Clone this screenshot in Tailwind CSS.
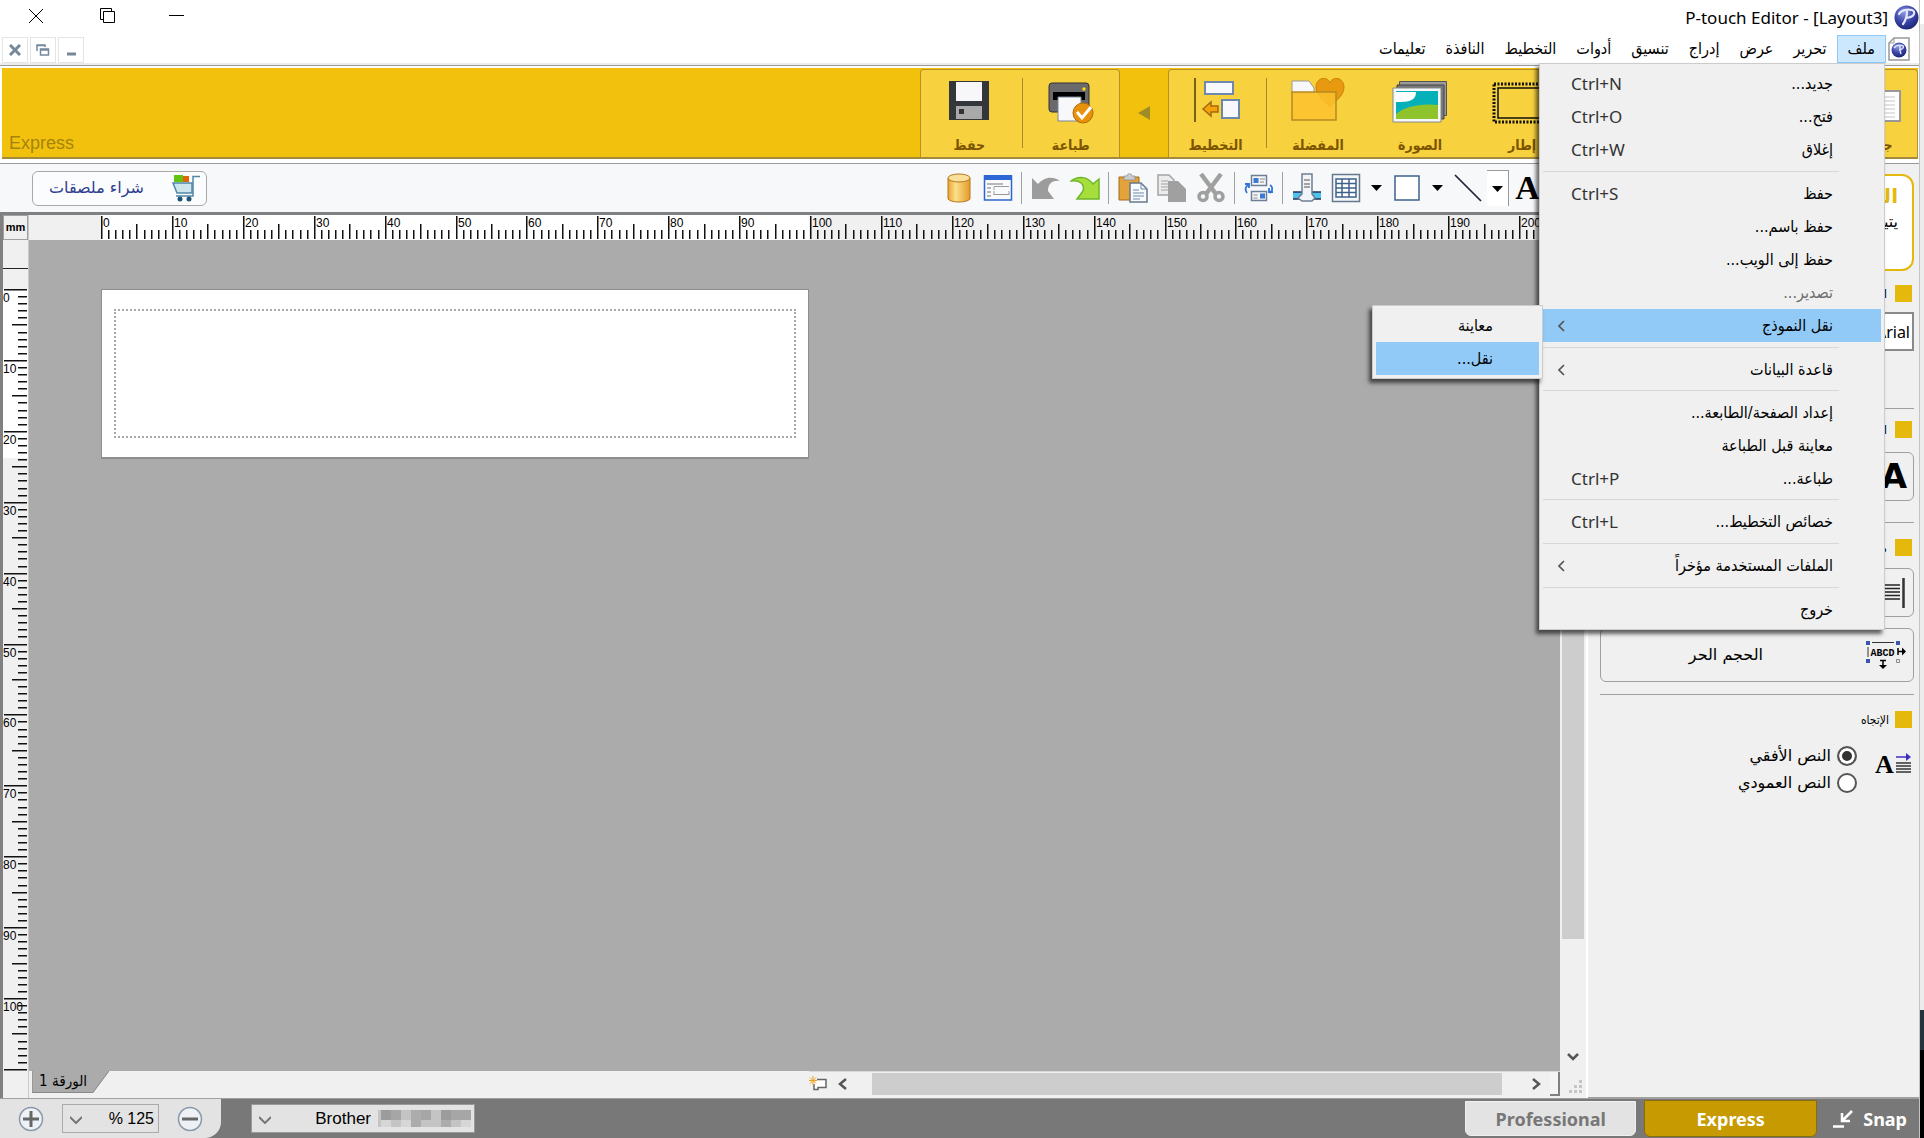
<!DOCTYPE html>
<html lang="ar">
<head>
<meta charset="utf-8">
<title>P-touch Editor</title>
<script src="https://cdn.jsdelivr.net/npm/@tailwindcss/browser@4"></script>
</head>
<body class="flex h-screen overflow-hidden bg-[#f0f0f0] font-['DejaVu_Sans_Condensed',sans-serif] text-base text-black">

<div class="relative flex min-w-0 flex-1 flex-col">

  <!-- Title bar -->
  <header class="flex h-[35px] shrink-0 items-center justify-between bg-white">
    <div class="flex pb-1">
      <button aria-label="Close" class="flex h-6 w-[72px] items-center justify-center"><svg width="16" height="16" viewBox="0 0 16 16" stroke="#000" fill="none"><path d="M1 1l14 14M15 1L1 15"/></svg></button>
      <button aria-label="Restore" class="flex h-6 w-[71px] items-center justify-center"><svg width="16" height="16" viewBox="0 0 16 16" stroke="#000" fill="none"><path d="M.5 11.500V.5h11v3M.5 11.500h3M3.500 3.500h11v11h-11z"/></svg></button>
      <button aria-label="Minimize" class="flex h-6 w-[68px] items-center justify-center"><svg width="16" height="16" viewBox="0 0 16 16" stroke="#000"><path d="M0 7.500h15"/></svg></button>
    </div>
    <div class="flex items-center gap-1.5">
      <h1 class="font-['Noto_Sans',sans-serif] text-[17px] leading-6">P-touch Editor - [Layout3]</h1>
      <svg width="25" height="25" viewBox="0 0 25 25"><defs><radialGradient id="orb" cx=".4" cy=".3" r=".75"><stop offset="0" stop-color="#8c97e0"/><stop offset=".55" stop-color="#3a44a6"/><stop offset="1" stop-color="#1c2370"/></radialGradient></defs><circle cx="12.500" cy="12.500" r="12" fill="url(#orb)"/><path d="M5 9C7 5 13 4 18 5c4 1.500 3 7-6 8M13 6c0 4-1 9-4 13" fill="none" stroke="#e4e8ff" stroke-width="2.200" stroke-linecap="round"/></svg>
    </div>
  </header>

  <!-- Menu bar -->
  <nav class="flex h-[30px] shrink-0 items-stretch justify-between border-b-2 border-[#ececec] bg-white pr-[9px]">
    <div class="flex gap-0.5 pt-0.5 pl-0.5">
      <button aria-label="Close document" class="flex size-[26px] items-center justify-center border border-[#e4e4e4]"><svg width="12" height="12" viewBox="0 0 12 12" stroke="#75879a" stroke-width="3"><path d="M1 1l10 10M11 1L1 11"/></svg></button>
      <button aria-label="Restore document" class="flex size-[26px] items-center justify-center border border-[#e4e4e4]"><svg width="14" height="14" viewBox="0 0 14 14" stroke="#75879a" fill="none" stroke-width="1.500"><path d="M1 8V2h8v2M1 2.500h8M4.500 6h8v6h-8zM4.500 7h8" /></svg></button>
      <button aria-label="Minimize document" class="flex size-[26px] items-center justify-center border border-[#e4e4e4]"><svg width="12" height="12" viewBox="0 0 12 12" stroke="#75879a" stroke-width="3"><path d="M2 10h9"/></svg></button>
    </div>
    <div dir="rtl" class="flex items-stretch">
      <svg class="mt-0.5 ml-0.5" width="22" height="24" viewBox="0 0 22 24"><path d="M6 1h15v22H1V6z" fill="#fff" stroke="#999" stroke-width="1.500"/><path d="M6 1v5H1" fill="none" stroke="#999"/><circle cx="11" cy="13" r="7.500" fill="url(#orb)"/><path d="M6 11c2-3 5-3 8-2.500 3 1 1 4-3 4.500M12 9c0 3 0 6 1 8" fill="none" stroke="#dde2ff" stroke-width="1.500"/></svg>
      <button class="border border-[#90c8f6] bg-[#cce8ff] px-2.5">ملف</button>
      <button class="px-2.5">تحرير</button>
      <button class="px-2.5">عرض</button>
      <button class="px-2.5">إدراج</button>
      <button class="px-2.5">تنسيق</button>
      <button class="px-2.5">أدوات</button>
      <button class="px-2.5">التخطيط</button>
      <button class="px-2.5">النافذة</button>
      <button class="px-2.5">تعليمات</button>
    </div>
  </nav>

  <!-- Ribbon -->
  <section class="flex h-[99px] shrink-0 flex-col border-y border-[#9a9a9a] bg-white pt-0.5 pr-px pb-1 pl-0.5">
    <div class="flex flex-1 items-end border-b-2 border-[#a38a3c] bg-[#f1c10e] font-bold text-[#7d5500]">
      <div class="flex-1 pl-[7px] font-['Liberation_Sans',sans-serif] text-lg font-normal text-[#a5830c]">Express</div>
      <div class="flex h-[88px] w-[200px] rounded-t border border-b-0 border-[#b3922a] bg-[#f7d13e] text-sm">
        <button class="flex flex-1 flex-col items-center justify-between pt-2.5 pr-1 pb-0.5">
          <svg width="42" height="42" viewBox="0 0 42 42"><path d="M1 1h40v39H1z" fill="#33373b"/><path d="M8 2h26v19H8z" fill="#f7f7f9"/><path d="M8 26h26v13H8z" fill="#a9a9a9"/><path d="M11 29h5v5h-5z" fill="#333"/></svg>
          <span>حفظ</span>
        </button>
        <span class="mt-2 h-[70px] w-px bg-[#a88a2a]"></span>
        <button class="flex flex-1 flex-col items-center justify-between pt-2.5 pb-0.5">
          <svg width="46" height="44" viewBox="0 0 46 44"><rect x="1" y="3" width="40" height="29" rx="3" fill="#6a6a6c" stroke="#333"/><path d="M5 12h32v8H5z" fill="#000"/><path d="M10 17h23v24H10z" fill="#f8f8fa" stroke="#7b8797"/><circle cx="36" cy="9" r="1.700" fill="#fd0"/><circle cx="35" cy="33" r="10" fill="#e8920c" stroke="#b36a08"/><path d="M29 32l5 6 9-11" fill="none" stroke="#fff" stroke-width="3"/></svg>
          <span>طباعة</span>
        </button>
      </div>
      <button aria-label="طي" class="flex h-[88px] w-12 items-center justify-center"><svg width="12" height="14" viewBox="0 0 12 14"><path d="M12 0v14L0 7z" fill="#a08c24"/></svg></button>
      <div class="flex h-[88px] w-[750px] rounded-t border border-b-0 border-[#b3922a] bg-[#f7d13e] text-sm">
        <button class="flex w-[97px] flex-col items-center justify-between pt-2 pr-1 pb-0.5">
          <svg width="48" height="46" viewBox="0 0 48 46"><path d="M3 0v44" stroke="#4a3c10" stroke-width="1.500"/><path d="M13 4h28v12H13zM30 22h17v18H30z" fill="#f6f8fb" stroke="#6d88ac" stroke-width="2"/><path d="M11 31l8-7v4h7v6h-7v4z" fill="#f5a30a" stroke="#a26a10" stroke-width="1.500"/></svg>
          <span>التخطيط</span>
        </button>
        <span class="mt-2 h-[70px] w-px bg-[#a88a2a]"></span>
        <button class="flex w-[102px] flex-col items-center justify-between pt-2 pb-0.5">
          <svg width="56" height="46" viewBox="0 0 56 46"><path d="M2 15V3h17l5 7v5z" fill="#f8f8fa" stroke="#999"/><path d="M40 29C33 22 26 17 26 9c0-9 11-12 14-4 3-8 14-5 14 4 0 8-7 13-14 20z" fill="#e9990f" stroke="#c8820e"/><path d="M2 14h44v28H2z" fill="#fcc22e" fill-opacity=".85" stroke="#b58a20" stroke-width="1.500"/></svg>
          <span>المفضلة</span>
        </button>
        <button class="flex w-[102px] flex-col items-center justify-between pt-2.5 pb-0.5">
          <svg width="56" height="44" viewBox="0 0 56 44"><path d="M7.500 1.500h47v34h-47z" fill="#9a9a9a" stroke="#555"/><path d="M5 5h47v34H5z" fill="#777" stroke="#444"/><path d="M1 8h48v34H1z" fill="#f4f8fa" stroke="#888"/><path d="M4 11h42v28H4z" fill="#05b0b8"/><path d="M4 12h20c0 10-10 10-20 10z" fill="#fff"/><path d="M4 34c8-7 24-11 42-9v14H4z" fill="#8fc32b"/></svg>
          <span>الصورة</span>
        </button>
        <button class="flex w-[102px] flex-col items-center justify-between pt-3 pb-0.5">
          <svg width="60" height="42" viewBox="0 0 60 42" fill="none" stroke="#111"><path d="M2 2h56v38H2z" stroke-width="3" stroke-dasharray="2 1.500"/><path d="M6 6h48v30H6z" stroke-width="1.500"/></svg>
          <span>إطار</span>
        </button>
        <button class="ml-auto flex w-[84px] flex-col items-center justify-between pt-5 pb-0.5">
          <svg width="52" height="32" viewBox="0 0 52 32"><path d="M1 1h50v30H1z" fill="#fff" stroke="#999" stroke-width="2"/><path d="M8 7h38M8 11h38M8 15h38M8 19h38M8 23h38M8 27h38" stroke="#c4c4c4"/></svg>
          <span>جدول</span>
        </button>
      </div>
    </div>
  </section>

  <!-- Editor and property panel -->
  <div class="flex min-h-0 flex-1">
    <main class="flex min-w-0 flex-1 flex-col">

      <!-- Toolbar -->
      <div class="flex h-[51px] shrink-0 items-center justify-between border-b-3 border-[#808080] bg-[#f7f8fa] pr-[42px] pl-8">
        <button dir="rtl" class="flex h-[35px] w-[175px] items-center gap-7 rounded-md border border-[#a8a8a8] bg-[#fbfcfd] pr-1.5 font-['DejaVu_Sans',sans-serif] text-[#2f3f8f]">
          <svg width="28" height="28" viewBox="0 0 28 28"><path d="M2 1h9v7H2z" fill="#62c410"/><path d="M11 2h6v6h-6z" fill="#e0640e"/><path d="M1 9h19v10H5z" fill="#cde6ee" stroke="#4f87a6" stroke-width="1.500"/><path d="M28 2.500h-7V22H4" fill="none" stroke="#4f87a6" stroke-width="1.500"/><circle cx="8" cy="25" r="2.500" fill="#1f5272"/><circle cx="17" cy="25" r="2.500" fill="#1f5272"/></svg>
          شراء ملصقات
        </button>
        <div class="flex items-center">
          <button aria-label="قاعدة البيانات" class="flex w-[39px] justify-center"><svg width="30" height="30" viewBox="0 0 30 30"><defs><linearGradient id="cyl"><stop offset="0" stop-color="#e9a32e"/><stop offset=".35" stop-color="#fce08c"/><stop offset="1" stop-color="#e49a26"/></linearGradient></defs><path d="M4 5v21c3 4 19 4 22 0V5z" fill="url(#cyl)" stroke="#b7761d"/><ellipse cx="15" cy="5" rx="11" ry="4" fill="#fbe09a" stroke="#b7761d"/></svg></button>
          <button aria-label="عرض السجل" class="flex w-[39px] justify-center"><svg width="30" height="30" viewBox="0 0 30 30"><path d="M1.500 3h27v24h-27z" fill="#f8fafc" stroke="#2e66cc" stroke-width="1.500"/><path d="M1 2h28v5H1z" fill="#2e66d6"/><path d="M4 11h16M4 15h4M4 19h4M4 23h4" stroke="#777"/><path d="M11 13.500h15M11 21.500h15M11 18v4M26 18v4M11 14v3" stroke="#999" fill="none"/></svg></button>
          <span class="mx-1 h-8 w-px bg-[#a0a0a0]"></span>
          <button aria-label="تراجع" class="flex w-[39px] justify-center"><svg width="30" height="30" viewBox="0 0 30 30"><path d="M1 5l6 6c5-6 14-9 22-3-9-1-12 4-12 10l6 8H1z" fill="#9c9c9c"/></svg></button>
          <button aria-label="إعادة" class="flex w-[39px] justify-center"><svg width="30" height="30" viewBox="0 0 30 30"><path d="M29 6l-6 5C18 4 9 2 1 8c9-1 14 3 12 10l-6 8h22z" fill="#a6df3c" stroke="#6db52a" stroke-width="1.500"/></svg></button>
          <span class="mx-1 h-8 w-px bg-[#a0a0a0]"></span>
          <button aria-label="لصق" class="flex w-[39px] justify-center"><svg width="30" height="30" viewBox="0 0 30 30"><path d="M1 4h20v23H1z" fill="#e3a33a" stroke="#a06a1a"/><path d="M6 3h3c0-3 5-3 5 0h3v4H6z" fill="#c9cdd2" stroke="#888" stroke-width=".7"/><path d="M12 10h11l6 6v13H12z" fill="#f8fafc" stroke="#66788c" stroke-width="1.500"/><path d="M23 10v6h6M15 17h6M15 20h11M15 23h11M15 26h7" fill="none" stroke="#6d88ac"/></svg></button>
          <button aria-label="نسخ" class="flex w-[39px] justify-center"><svg width="30" height="30" viewBox="0 0 30 30"><path d="M1 2h11l5 5v15H1z" fill="#ececec" stroke="#a4a4a4" stroke-width="1.500"/><path d="M4 8h7M4 11h9M4 14h8M4 17h8" stroke="#a4a4a4"/><path d="M11 8h10l8 8v13H11z" fill="#a0a0a0"/></svg></button>
          <button aria-label="قص" class="flex w-[39px] justify-center"><svg width="30" height="30" viewBox="0 0 30 30" stroke="#a0a0a0" fill="none"><path d="M5 1l15 20M25 1L10 21" stroke-width="4.500"/><circle cx="7" cy="23.500" r="4" stroke-width="3.500"/><circle cx="23" cy="23.500" r="4" stroke-width="3.500"/></svg></button>
          <span class="mx-1 h-8 w-px bg-[#a0a0a0]"></span>
          <button aria-label="تبديل" class="flex w-[39px] justify-center"><svg width="30" height="30" viewBox="0 0 30 30"><path d="M7.500 2.500h15v10h-15zM7.500 18.500h15v9h-15z" fill="#f4f6fa" stroke="#6d7f96" stroke-width="1.500"/><path d="M9.500 5h5v5h-5zM16 20.500h5v5h-5z" fill="#3a7ad0"/><path d="M16 6h5M16 9h4M9.500 22h4M9.500 25h4" stroke="#888"/><path d="M4 12c-3 2-3 5-1 8M1 11h4v4M26 12c3 2 3 5 0 8M29 19h-4v-4" fill="none" stroke="#2d73d8" stroke-width="1.800"/></svg></button>
          <span class="mx-1 h-8 w-px bg-[#a0a0a0]"></span>
          <button aria-label="قطع الشريط" class="flex w-[39px] justify-center"><svg width="30" height="30" viewBox="0 0 30 30"><path d="M1 19h28v7H1z" fill="#4cc3ee"/><path d="M1 19h28M1 26h28" stroke="#235" stroke-width="1.500"/><path d="M10 1h10v20l3 4-3 3H10l-4-3 4-4z" fill="#f2f4f7" stroke="#6d7f96" stroke-width="1.500"/><path d="M12 7h6M12 11h6M12 14h6" stroke="#888" stroke-width="1.500"/></svg></button>
          <button aria-label="جدول" class="flex w-[39px] justify-center"><svg width="30" height="30" viewBox="0 0 30 30"><path d="M1.500 1.500h27v27h-27z" fill="#f4f6f8" stroke="#66788c" stroke-width="1.500"/><path d="M5 6h20v18H5zM5 10.500h20M5 15h20M5 19.500h20M11 6v18M18 6v18" fill="#fff" stroke="#3f628c" stroke-width="1.500"/></svg></button>
          <button aria-label="خيارات الجدول" class="flex w-[22px] justify-center"><svg width="11" height="6" viewBox="0 0 11 6"><path d="M0 0h11L5.500 6z"/></svg></button>
          <button aria-label="مستطيل" class="flex w-[39px] justify-center"><svg width="26" height="26" viewBox="0 0 26 26"><path d="M1 1h24v24H1z" fill="#fff" stroke="#3f628c" stroke-width="1.500"/></svg></button>
          <button aria-label="خيارات المستطيل" class="flex w-[22px] justify-center"><svg width="11" height="6" viewBox="0 0 11 6"><path d="M0 0h11L5.500 6z"/></svg></button>
          <button aria-label="خط" class="flex w-[39px] justify-center"><svg width="28" height="28" viewBox="0 0 28 28"><path d="M1 1l26 26" stroke="#223" stroke-width="1.700"/></svg></button>
          <button aria-label="خيارات الخط" class="flex h-9 w-[22px] items-center justify-center border-t border-r border-[#999] bg-white"><svg width="11" height="6" viewBox="0 0 11 6"><path d="M0 0h11L5.500 6z"/></svg></button>
          <button aria-label="نص" class="w-[37px] text-center font-['Liberation_Serif',serif] text-[34px] leading-9 font-bold">A</button>
        </div>
      </div>

      <div class="flex min-h-0 flex-1 border-l-3 border-[#808080]">
        <!-- Vertical ruler -->
        <div class="flex w-[26px] shrink-0 flex-col border-r border-[#c8c8c8]">
          <div class="flex h-[25px] items-center justify-center border border-[#a0a0a0] font-['Liberation_Sans',sans-serif] text-[11px] font-bold">mm</div>
          <svg id="vruler" class="min-h-0 w-full flex-1"></svg>
          <div class="h-[26px]"></div>
        </div>

        <!-- Canvas column -->
        <div class="flex min-w-0 flex-1 flex-col">
          <svg id="hruler" class="h-[25px] w-full shrink-0"></svg>
          <div class="min-h-0 flex-1 overflow-hidden bg-[#ababab] pt-[49px] pl-[72px]">
            <div class="h-[170px] w-[708px] border border-b-2 border-[#8e8e8e] bg-white px-3 py-[19px]">
              <div class="h-full border-2 border-dotted border-[#a8a8a8]"></div>
            </div>
          </div>
          <div class="flex h-[27px] shrink-0 items-start">
            <div class="relative ml-[3px] h-[22px] w-[77px]">
              <svg class="absolute inset-0" width="77" height="22"><path d="M0 0h77L61 22H0z" fill="#ababab"/><path d="M0 0v21.500h61L77 0" fill="none" stroke="#888"/></svg>
              <a href="#" dir="rtl" class="relative block pr-[22px] text-[15px] leading-5">الورقة 1</a>
            </div>
            <div class="ml-auto flex h-[25px] w-[751px] items-center border-t border-[#d8d8d8]">
              <button aria-label="ورقة جديدة" class="w-6"><svg width="20" height="16" viewBox="0 0 20 16"><path d="M8 3.500h9v8H9v2H5V8" fill="#fff" stroke="#666" stroke-width="1.500"/><path d="M4 0v9M0 4.500h8M1 1.500l6 6M7 1.500l-6 6" stroke="#f0a020"/></svg></button>
              <button aria-label="تمرير لليسار" class="ml-1 w-[35px]"><svg width="11" height="12" viewBox="0 0 11 12"><path d="M9 1L3 6l6 5" fill="none" stroke="#555" stroke-width="2.500"/></svg></button>
              <div class="h-[22px] flex-1 bg-[#cdcdcd]"></div>
              <button aria-label="تمرير لليمين" class="flex w-12 justify-center pl-5"><svg width="11" height="12" viewBox="0 0 11 12"><path d="M2 1l6 5-6 5" fill="none" stroke="#555" stroke-width="2.500"/></svg></button>
              <span class="h-6 w-[10px] border-r-2 border-b-2 border-[#808080] bg-[#f4f4f4]"></span>
            </div>
          </div>
        </div>

        <!-- Vertical scrollbar -->
        <div class="flex w-[28px] shrink-0 flex-col items-center border-r-2 border-white">
          <div class="h-[82%] w-[22px] shrink-0 bg-[#cdcdcd]"></div>
          <div class="flex flex-1 flex-col items-center justify-end gap-4 pb-[5px]">
            <button aria-label="تمرير لأسفل" class="h-[14px]"><svg width="12" height="10" viewBox="0 0 12 10"><path d="M1 2l5 5 5-5" fill="none" stroke="#555" stroke-width="2.500"/></svg></button>
            <svg class="ml-1" width="13" height="13" viewBox="0 0 13 13" fill="#c4c4c4"><path d="M10 0h3v3h-3zM10 5h3v3h-3zM5 5h3v3H5zM0 10h3v3H0zM5 10h3v3H5zM10 10h3v3h-3z"/></svg>
          </div>
        </div>
      </div>
    </main>

    <!-- Properties -->
    <aside dir="rtl" class="w-[331px] shrink-0 border-b border-[#a0a0a0] bg-[#f0f0f0] pt-2.5 pr-[5px] pl-3 font-['DejaVu_Sans',sans-serif]">
      <div class="h-[97px] rounded-xl border-2 border-[#e5b80c] bg-white py-1.5 pr-3.5">
        <p class="text-xl font-bold text-[#e5b80c]">النص</p>
        <p class="text-base">يتيح</p>
      </div>
      <h2 class="mt-3.5 flex h-[17px] items-center gap-2 pr-0.5 text-xs"><span class="size-[17px] bg-[#e5b80c]"></span>الخط</h2>
      <select aria-label="الخط" class="mt-2.5 block h-[39px] w-full appearance-none border-2 border-[#8a8a8a] bg-white pr-0.5 font-['Noto_Sans',sans-serif] text-base"><option>Arial</option></select>
      <hr class="mt-[57px] border-[#a0a0a0]">
      <h2 class="mt-3 flex h-[17px] items-center gap-2 pr-0.5 text-xs"><span class="size-[17px] bg-[#e5b80c]"></span>النمط</h2>
      <button class="mt-3.5 flex h-[49px] w-full items-center rounded-md border border-[#a0a0a0] pr-1.5 text-[34px] font-bold">A</button>
      <hr class="mt-[21px] border-[#a0a0a0]">
      <h2 class="mt-4 flex h-[17px] items-center gap-2 pr-0.5 text-xs"><span class="size-[17px] bg-[#e5b80c]"></span>محاذاة</h2>
      <button aria-label="محاذاة" class="mt-3 flex h-[49px] w-full items-center rounded-md border border-[#a0a0a0] pr-2"><svg width="40" height="30" viewBox="0 0 40 30"><path d="M38.500 0v30" stroke="#333" stroke-width="2.500"/><path d="M8 7h27M8 10.500h27M8 14h27M8 17.500h27M8 21h27" stroke="#222" stroke-width="1.500"/></svg></button>
      <button class="mt-[11px] flex h-[54px] w-full items-center rounded-md border border-[#a0a0a0] pr-1.5 text-base">
        <svg width="42" height="30" viewBox="0 0 42 30"><path d="M7 2.500h22M3 7v10" stroke="#333"/><path d="M1 1h4v4H1zM31 1h4v4h-4zM1 19h4v4H1z" fill="#3a55b0"/><path d="M31.500 19.500h3v3h-3z" fill="none" stroke="#888"/><path d="M33 11.500h5M33 8v7" stroke="#000" stroke-width="1.500"/><path d="M37 7.500l4 4-4 4zM14 25h8l-4 4z"/><path d="M18 20v6M15 20.500h6" stroke="#000" stroke-width="1.500"/><text x="5.500" y="16" font-family="Liberation Mono" font-size="10" font-weight="bold" direction="ltr">ABCD</text></svg>
        <span class="flex-1 pr-[102px] text-right">الحجم الحر</span>
      </button>
      <hr class="mt-3 border-[#a0a0a0]">
      <h2 class="mt-4 flex h-[17px] items-center gap-1.5 pr-0.5 font-['DejaVu_Sans_Condensed',sans-serif] text-xs"><span class="size-[17px] bg-[#e5b80c]"></span>الإتجاه</h2>
      <fieldset class="mt-3.5 flex gap-[18px] pr-0.5 text-base">
        <svg class="mt-2.5" width="37" height="24" viewBox="0 0 37 24"><text x="0" y="21" font-family="Liberation Serif" font-weight="bold" font-size="26" direction="ltr">A</text><path d="M21 5h12" stroke="#3a30c0" stroke-width="1.500"/><path d="M31 1l5 4-5 4z" fill="#3a30c0"/><path d="M21 11h15M21 14h15M21 17h15M21 20h15" stroke="#333" stroke-width="1.500"/></svg>
        <div class="flex flex-col">
          <label class="flex h-[27px] items-center gap-1.5"><input type="radio" name="dir" checked class="size-5 appearance-none rounded-full border-2 border-[#555] bg-white checked:bg-[#333] checked:shadow-[inset_0_0_0_3px_white]">النص الأفقي</label>
          <label class="flex h-[27px] items-center gap-1.5"><input type="radio" name="dir" class="size-5 appearance-none rounded-full border-2 border-[#555] bg-white checked:bg-[#333] checked:shadow-[inset_0_0_0_3px_white]">النص العمودي</label>
        </div>
      </fieldset>
    </aside>
  </div>

  <!-- Status bar -->
  <footer class="flex h-[40px] shrink-0 items-center justify-between border-t border-[#a0a0a0] bg-[#787878]">
    <div class="flex h-full items-center">
      <div class="flex h-full w-[221px] items-center gap-[18px] rounded-br-2xl bg-[#e3e3e3] pl-[18px]">
        <button aria-label="تكبير"><svg width="26" height="26" viewBox="0 0 26 26"><circle cx="13" cy="13" r="11.500" fill="#eef1f5" stroke="#8b98aa" stroke-width="1.500"/><path d="M13 5v16M5 13h16" stroke="#666" stroke-width="3"/></svg></button>
        <div class="relative">
          <select aria-label="تكبير/تصغير" dir="rtl" class="block h-[29px] w-[97px] appearance-none border border-[#aaa] bg-[#e3e3e3] pr-1 font-['Liberation_Sans',sans-serif] text-base"><option>125 %</option></select>
          <svg class="absolute top-3 left-2" width="12" height="8" viewBox="0 0 12 8"><path d="M0 1l6 6 6-6" fill="none" stroke="#777" stroke-width="2"/></svg>
        </div>
        <button aria-label="تصغير"><svg width="26" height="26" viewBox="0 0 26 26"><circle cx="13" cy="13" r="11.500" fill="#eef1f5" stroke="#8b98aa" stroke-width="1.500"/><path d="M5 13h16" stroke="#666" stroke-width="3"/></svg></button>
      </div>
      <div class="relative ml-[30px]">
        <select aria-label="الطابعة" dir="rtl" class="block h-[29px] w-[224px] appearance-none border border-[#999] bg-[#e3e3e3] pr-[103px] font-['Liberation_Sans',sans-serif] text-[17px]"><option>Brother</option></select>
        <svg class="absolute top-3 left-2" width="12" height="8" viewBox="0 0 12 8"><path d="M0 1l6 6 6-6" fill="none" stroke="#777" stroke-width="2"/></svg>
        <svg class="absolute top-1.5 right-1" width="93" height="17" viewBox="0 0 93 17"><path d="M0 0h93v17H0z" fill="#c4c4c4"/><path d="M3 0h10v10H3zM63 0h10v10H63z" fill="#9c9c9c"/><path d="M13 0h10v10H13zM43 0h10v10H43zM73 0h20v10H73z" fill="#a6a6a6"/><path d="M33 0h10v17H33zM63 10h10v7H63z" fill="#acacac"/><path d="M3 10h10v7H3zM23 10h10v7H23zM83 10h10v7H83z" fill="#d6d6d6"/></svg>
      </div>
    </div>
    <div class="flex h-full items-center pr-3 font-['Noto_Sans',sans-serif] text-lg font-bold">
      <button class="mr-2 h-[35px] w-[171px] rounded-b-md border border-[#f0f0f0] bg-[#e3e3e3] text-[#777]">Professional</button>
      <button class="mr-4 h-[37px] w-[173px] rounded-b-md border border-[#8a6c10] bg-[#c69a00] text-white">Express</button>
      <button class="flex items-center gap-2.5 text-white"><svg width="20" height="20" viewBox="0 0 20 20" fill="none" stroke="#fff" stroke-width="2.500"><path d="M19 2l-9 9M9 4v8h8M0 17.500h11"/></svg>Snap</button>
    </div>
  </footer>

  <!-- File menu -->
  <ul dir="rtl" class="absolute top-[63px] right-[34px] w-[346px] border border-[#ccc] bg-[#f0f0f0] p-[3px] leading-[33px] shadow-[-3px_4px_4px_rgba(0,0,0,0.6)]">
    <li><button class="flex w-full justify-between pr-12 pl-7">جديد...<kbd dir="ltr" class="font-['Noto_Sans',sans-serif] text-[17px] text-[#333]">Ctrl+N</kbd></button></li>
    <li><button class="flex w-full justify-between pr-12 pl-7">فتح...<kbd dir="ltr" class="font-['Noto_Sans',sans-serif] text-[17px] text-[#333]">Ctrl+O</kbd></button></li>
    <li><button class="flex w-full justify-between pr-12 pl-7">إغلاق<kbd dir="ltr" class="font-['Noto_Sans',sans-serif] text-[17px] text-[#333]">Ctrl+W</kbd></button></li>
    <li class="my-[5px] mr-[42px] h-px bg-[#d7d7d7]"></li>
    <li><button class="flex w-full justify-between pr-12 pl-7">حفظ<kbd dir="ltr" class="font-['Noto_Sans',sans-serif] text-[17px] text-[#333]">Ctrl+S</kbd></button></li>
    <li><button class="flex w-full pr-12">حفظ باسم...</button></li>
    <li><button class="flex w-full pr-12">حفظ إلى الويب...</button></li>
    <li><button disabled class="flex w-full pr-12 text-[#6d6d6d]">تصدير...</button></li>
    <li class="relative">
      <button class="flex w-full items-center justify-between bg-[#91c9f7] pr-12 pl-3.5">نقل النموذج<svg width="8" height="12" viewBox="0 0 8 12"><path d="M7 1L2 6l5 5" fill="none" stroke="#555" stroke-width="1.700"/></svg></button>
      <ul class="absolute -top-1 right-full w-[171px] border border-[#ccc] bg-[#f0f0f0] p-[3px] shadow-[-3px_4px_4px_rgba(0,0,0,0.6)]">
        <li><button class="flex w-full pr-[46px]">معاينة</button></li>
        <li><button class="flex w-full bg-[#91c9f7] pr-[46px]">نقل...</button></li>
      </ul>
    </li>
    <li class="my-[5px] mr-[42px] h-px bg-[#d7d7d7]"></li>
    <li><button class="flex w-full items-center justify-between pr-12 pl-3.5">قاعدة البيانات<svg width="8" height="12" viewBox="0 0 8 12"><path d="M7 1L2 6l5 5" fill="none" stroke="#555" stroke-width="1.700"/></svg></button></li>
    <li class="mt-1 mr-[42px] mb-[5px] h-px bg-[#d7d7d7]"></li>
    <li><button class="flex w-full pr-12">إعداد الصفحة/الطابعة...</button></li>
    <li><button class="flex w-full pr-12">معاينة قبل الطباعة</button></li>
    <li><button class="flex w-full justify-between pr-12 pl-7">طباعة...<kbd dir="ltr" class="font-['Noto_Sans',sans-serif] text-[17px] text-[#333]">Ctrl+P</kbd></button></li>
    <li class="mt-1 mr-[42px] mb-[5px] h-px bg-[#d7d7d7]"></li>
    <li><button class="flex w-full justify-between pr-12 pl-7">خصائص التخطيط...<kbd dir="ltr" class="font-['Noto_Sans',sans-serif] text-[17px] text-[#333]">Ctrl+L</kbd></button></li>
    <li class="my-[5px] mr-[42px] h-px bg-[#d7d7d7]"></li>
    <li><button class="flex w-full items-center justify-between pr-12 pl-3.5">الملفات المستخدمة مؤخراً<svg width="8" height="12" viewBox="0 0 8 12"><path d="M7 1L2 6l5 5" fill="none" stroke="#555" stroke-width="1.700"/></svg></button></li>
    <li class="my-[5px] mr-[42px] h-px bg-[#d7d7d7]"></li>
    <li><button class="flex w-full pr-12">خروج</button></li>
  </ul>
</div>

<!-- Desktop sliver beside the window -->
<div class="flex w-[5px] shrink-0 flex-col border-l border-[#c4c4c4] bg-[#ececec]">
  <div class="h-6 bg-white"></div>
  <div class="flex-1"></div>
  <div class="h-10 bg-[#25333d]"></div>
  <div class="h-[88px] bg-black"></div>
</div>

<script>
  const PX_PER_MM = 7.09;
  const rect = (x, y, w, h, fill) => `<rect x="${x}" y="${y}" width="${w}" height="${h}" fill="${fill}"/>`;
  const label = (x, y, n) => `<text x="${x}" y="${y}" font-family="Liberation Sans" font-size="12" fill="#000">${n}</text>`;
  const tickLength = (mm, major, mid, minor) => mm % 10 === 0 ? major : mm % 5 === 0 ? mid : minor;

  // Horizontal ruler: white over the label's 100 mm, grey elsewhere.
  let h = rect(0, 0, 2000, 25, '#f0f0f0') + rect(72, 0, 708, 25, '#fff');
  for (let mm = 0; mm <= 204; mm++) {
    const x = Math.round(72 + mm * PX_PER_MM), len = tickLength(mm, 23, 15, 9);
    h += rect(x, 24 - len, 1.5, len, '#111');
    if (mm % 10 === 0) h += label(x + 2, 12, mm);
  }
  document.getElementById('hruler').innerHTML = h;

  // Vertical ruler: white over the label's 24 mm.
  let v = rect(0, 49, 25, 169, '#fff') + rect(0, 28, 25, 1, '#222');
  for (let mm = 0; mm <= 110; mm++) {
    const y = Math.round(49 + mm * PX_PER_MM), len = tickLength(mm, 23, 15, 9);
    v += rect(24 - len, y, len, 1.5, '#111');
    if (mm % 10 === 0 && mm < 110) v += label(0, y + 13, mm);
  }
  document.getElementById('vruler').innerHTML = v;
</script>
</body>
</html>
